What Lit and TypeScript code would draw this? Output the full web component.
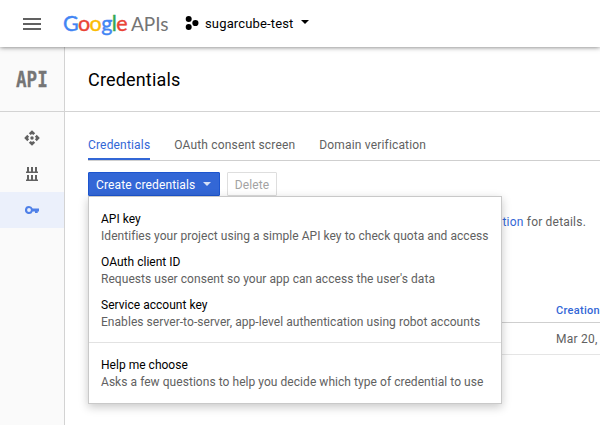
import { LitElement, html, css, svg } from "lit";
import { customElement, property } from "lit/decorators.js";
import { classMap } from "lit/directives/class-map.js";

interface Choice {
  title: string;
  text: string;
}

const CHOICES: Choice[] = [
  { title: "API key", text: "Identifies your project using a simple API key to check quota and access" },
  { title: "OAuth client ID", text: "Requests user consent so your app can access the user's data" },
  { title: "Service account key", text: "Enables server-to-server, app-level authentication using robot accounts" },
];

const HELP: Choice = {
  title: "Help me choose",
  text: "Asks a few questions to help you decide which type of credential to use",
};

@customElement("top-bar")
export class TopBar extends LitElement {
  static styles = css`
    :host {
      display: flex;
      align-items: center;
      height: 47px;
      box-sizing: border-box;
      padding-left: 23px;
      background: #fff;
      box-shadow: 0 0 5px rgba(0, 0, 0, 0.6);
      position: relative;
      z-index: 2;
    }
    svg { display: block; flex: none; }
    .logo {
      display: flex;
      align-items: baseline;
      margin: -2px 0 0 22px;
      width: 105px;
      height: 26px;
      line-height: 26px;
      font-family: Lato, sans-serif;
      white-space: nowrap;
    }
    .google {
      flex: none;
      width: 68px;
      font-size: 21.5px;
      letter-spacing: -0.6px;
      -webkit-text-stroke: 0.4px currentColor;
    }
    .apis { color: #757575; font-size: 19px; letter-spacing: 0; }
    .blue { color: #4285f4; }
    .red { color: #ea4335; }
    .yellow { color: #fbbc05; }
    .green { color: #34a853; }
    .project { margin-left: 17px; display: flex; align-items: center; }
    .project svg:first-child { margin-top: -1px; }
    .name { margin: 1px 7px 0 6px; font-size: 13px; line-height: 16px; letter-spacing: 0.15px; color: #000; }
    .caret { margin-top: -3px; }
  `;
  render() {
    return html`
      <svg width="18" height="12" viewBox="0 0 18 12">
        <path fill="#616161" d="M0 0h18v2H0zM0 5h18v2H0zM0 10h18v2H0z" />
      </svg>
      <div class="logo">
        <span class="google"><span class="blue">G</span><span class="red">o</span><span class="yellow">o</span><span class="blue">g</span><span class="green">l</span><span class="red">e</span></span>
        <span class="apis">APIs</span>
      </div>
      <div class="project">
        <svg width="14" height="14" viewBox="0 0 14 14">
          <circle cx="3.7" cy="3" r="3" /><circle cx="3.7" cy="11" r="3" /><circle cx="10.4" cy="7" r="3.1" />
        </svg>
        <span class="name">sugarcube-test</span>
        <svg class="caret" width="8" height="4" viewBox="0 0 8 4"><path d="M0 0h8L4 4z" /></svg>
      </div>
    `;
  }
}

@customElement("side-nav")
export class SideNav extends LitElement {
  static styles = css`
    :host {
      display: block;
      width: 65px;
      box-sizing: border-box;
      border-right: 1px solid #d3d3d3;
      background: #fafafa;
    }
    .brand {
      height: 65px;
      box-sizing: border-box;
      border-bottom: 1px solid #d3d3d3;
      display: flex;
      align-items: center;
      justify-content: center;
      padding-top: 1px;
      font: 700 22px/24px "DejaVu Sans Mono", monospace;
      color: #757575;
    }
    .brand span { transform: scaleX(0.8); -webkit-text-stroke: 0.3px currentColor; }
    .items { padding-top: 8px; }
    .item { height: 36px; display: flex; align-items: center; justify-content: center; color: #616161; }
    .active { background: #ebf0fb; color: #4f80e8; }
    svg { display: block; fill: currentColor; }
  `;
  render() {
    const icons = [
      svg`<path d="M8 .2 11.200 3.300 9.300 5.100 8 3.900 6.700 5.100 4.800 3.300zM8 15.800 4.800 12.700 6.700 10.900 8 12.100 9.300 10.900 11.200 12.700zM.2 8 3.300 4.800 5.100 6.700 3.900 8 5.100 9.300 3.300 11.200zM15.800 8 12.700 11.200 10.900 9.300 12.100 8 10.900 6.700 12.700 4.800z"/><circle cx="8" cy="8" r="1.700"/>`,
      svg`<path d="M3 1h2v5H3zM7 1h2v5H7zM11 1h2v5h-2zM2 5.500h12V7H2zM3 9h2v5H3zM7 9h2v5H7zM11 9h2v5h-2zM2 13.500h12V15H2z"/>`,
      svg`<path fill-rule="evenodd" d="M5 4a4 4 0 1 0 3.700 5.400H11V11h2.700V9.400H15V6.600H8.700A4 4 0 0 0 5 4zm0 2.100a1.900 1.900 0 1 1 0 3.800 1.900 1.900 0 0 1 0-3.800z"/>`,
    ];
    return html`
      <div class="brand"><span>API</span></div>
      <div class="items">
        ${icons.map((icon, i) => html`
          <div class=${classMap({ item: true, active: i === 2 })}>
            <svg width="16" height="16" viewBox="0 0 16 16">${icon}</svg>
          </div>`)}
      </div>
    `;
  }
}

@customElement("credential-menu")
export class CredentialMenu extends LitElement {
  @property({ attribute: false }) choices: Choice[] = [];
  static styles = css`
    :host {
      display: block;
      box-sizing: border-box;
      width: 414px;
      height: 208px;
      padding-top: 13px;
      background: #fff;
      border: 1px solid #c9c9c9;
      box-shadow: 0 3px 9px rgba(0, 0, 0, 0.22);
    }
    .choice { height: 43px; padding-left: 12px; box-sizing: border-box; white-space: nowrap; }
    .title { font-size: 12px; line-height: 18px; color: #000; letter-spacing: 0.02px; }
    .text { font-size: 12px; line-height: 17px; color: #616161; letter-spacing: 0.05px; }
    .rule { height: 1px; background: #e2e2e2; margin: 3px 0 13px; }
  `;
  private row(c: Choice) {
    return html`<div class="choice"><div class="title">${c.title}</div><div class="text">${c.text}</div></div>`;
  }
  render() {
    return html`${this.choices.map((c) => this.row(c))}<div class="rule"></div>${this.row(HELP)}`;
  }
}

@customElement("app-root")
export class AppRoot extends LitElement {
  static styles = css`
    :host {
      display: flex;
      flex-direction: column;
      width: 600px;
      height: 425px;
      overflow: hidden;
      background: #fff;
      font-family: Roboto, sans-serif;
      font-size: 12px;
      color: #616161;
    }
    .body { flex: 1; display: flex; min-height: 0; }
    main { flex: 1; min-width: 0; }
    .heading {
      height: 65px;
      box-sizing: border-box;
      border-bottom: 1px solid #d3d3d3;
      padding-left: 23px;
      font-size: 18px;
      line-height: 65px;
      color: #000;
      letter-spacing: 0.17px;
    }
    .content { padding-left: 23px; }
    .tabs {
      display: flex;
      gap: 24px;
      height: 49px;
      box-sizing: border-box;
      border-bottom: 1px solid #cfcfcf;
      padding-top: 24px;
      letter-spacing: 0.17px;
      white-space: nowrap;
    }
    .tab { line-height: 18px; height: 24px; box-sizing: border-box; }
    .current { color: #3367d6; border-bottom: 2px solid #3367d6; }
    .actions { display: flex; gap: 7px; padding-top: 11px; position: relative; }
    .create {
      display: flex;
      align-items: center;
      justify-content: space-between;
      width: 132px;
      height: 24px;
      box-sizing: border-box;
      padding: 1px 8px 0 7px;
      border: 1px solid #1c55cf;
      border-radius: 1px;
      background: #3367d6;
      color: #fff;
      letter-spacing: 0.15px;
      white-space: nowrap;
    }
    .create svg { margin-top: -2px; fill: #d6e1f7; }
    .delete {
      width: 50px;
      height: 24px;
      box-sizing: border-box;
      border: 1px solid #dedede;
      border-radius: 1px;
      line-height: 24px;
      text-align: center;
      color: #a3a3a3;
      letter-spacing: 0.1px;
    }
    credential-menu { position: absolute; left: 0; top: 35px; z-index: 1; }
    .note { margin-top: 17px; padding-right: 14px; text-align: right; line-height: 18px; letter-spacing: 0.2px; }
    .link { color: #3367d6; }
    .table { margin-top: 69px; }
    .cell { padding-left: 468px; white-space: nowrap; box-sizing: border-box; overflow: hidden; }
    .head {
      height: 23px;
      line-height: 22px;
      font-size: 11px;
      font-weight: 500;
      color: #3367d6;
      letter-spacing: 0.3px;
      border-bottom: 1px solid #cfcfcf;
    }
    .data { height: 32px; line-height: 32px; border-bottom: 1px solid #e5e5e5; letter-spacing: 0.25px; }
  `;
  render() {
    return html`
      <top-bar></top-bar>
      <div class="body">
        <side-nav></side-nav>
        <main>
          <div class="heading">Credentials</div>
          <div class="content">
            <div class="tabs">
              <div class="tab current">Credentials</div>
              <div class="tab">OAuth consent screen</div>
              <div class="tab">Domain verification</div>
            </div>
            <div class="actions">
              <div class="create">
                Create credentials
                <svg width="8" height="4" viewBox="0 0 8 4"><path d="M0 0h8L4 4z" /></svg>
              </div>
              <div class="delete">Delete</div>
              <credential-menu .choices=${CHOICES}></credential-menu>
            </div>
            <div class="note"><span class="link">tion</span> for details.</div>
            <div class="table">
              <div class="cell head">Creation</div>
              <div class="cell data">Mar 20,</div>
            </div>
          </div>
        </main>
      </div>
    `;
  }
}
